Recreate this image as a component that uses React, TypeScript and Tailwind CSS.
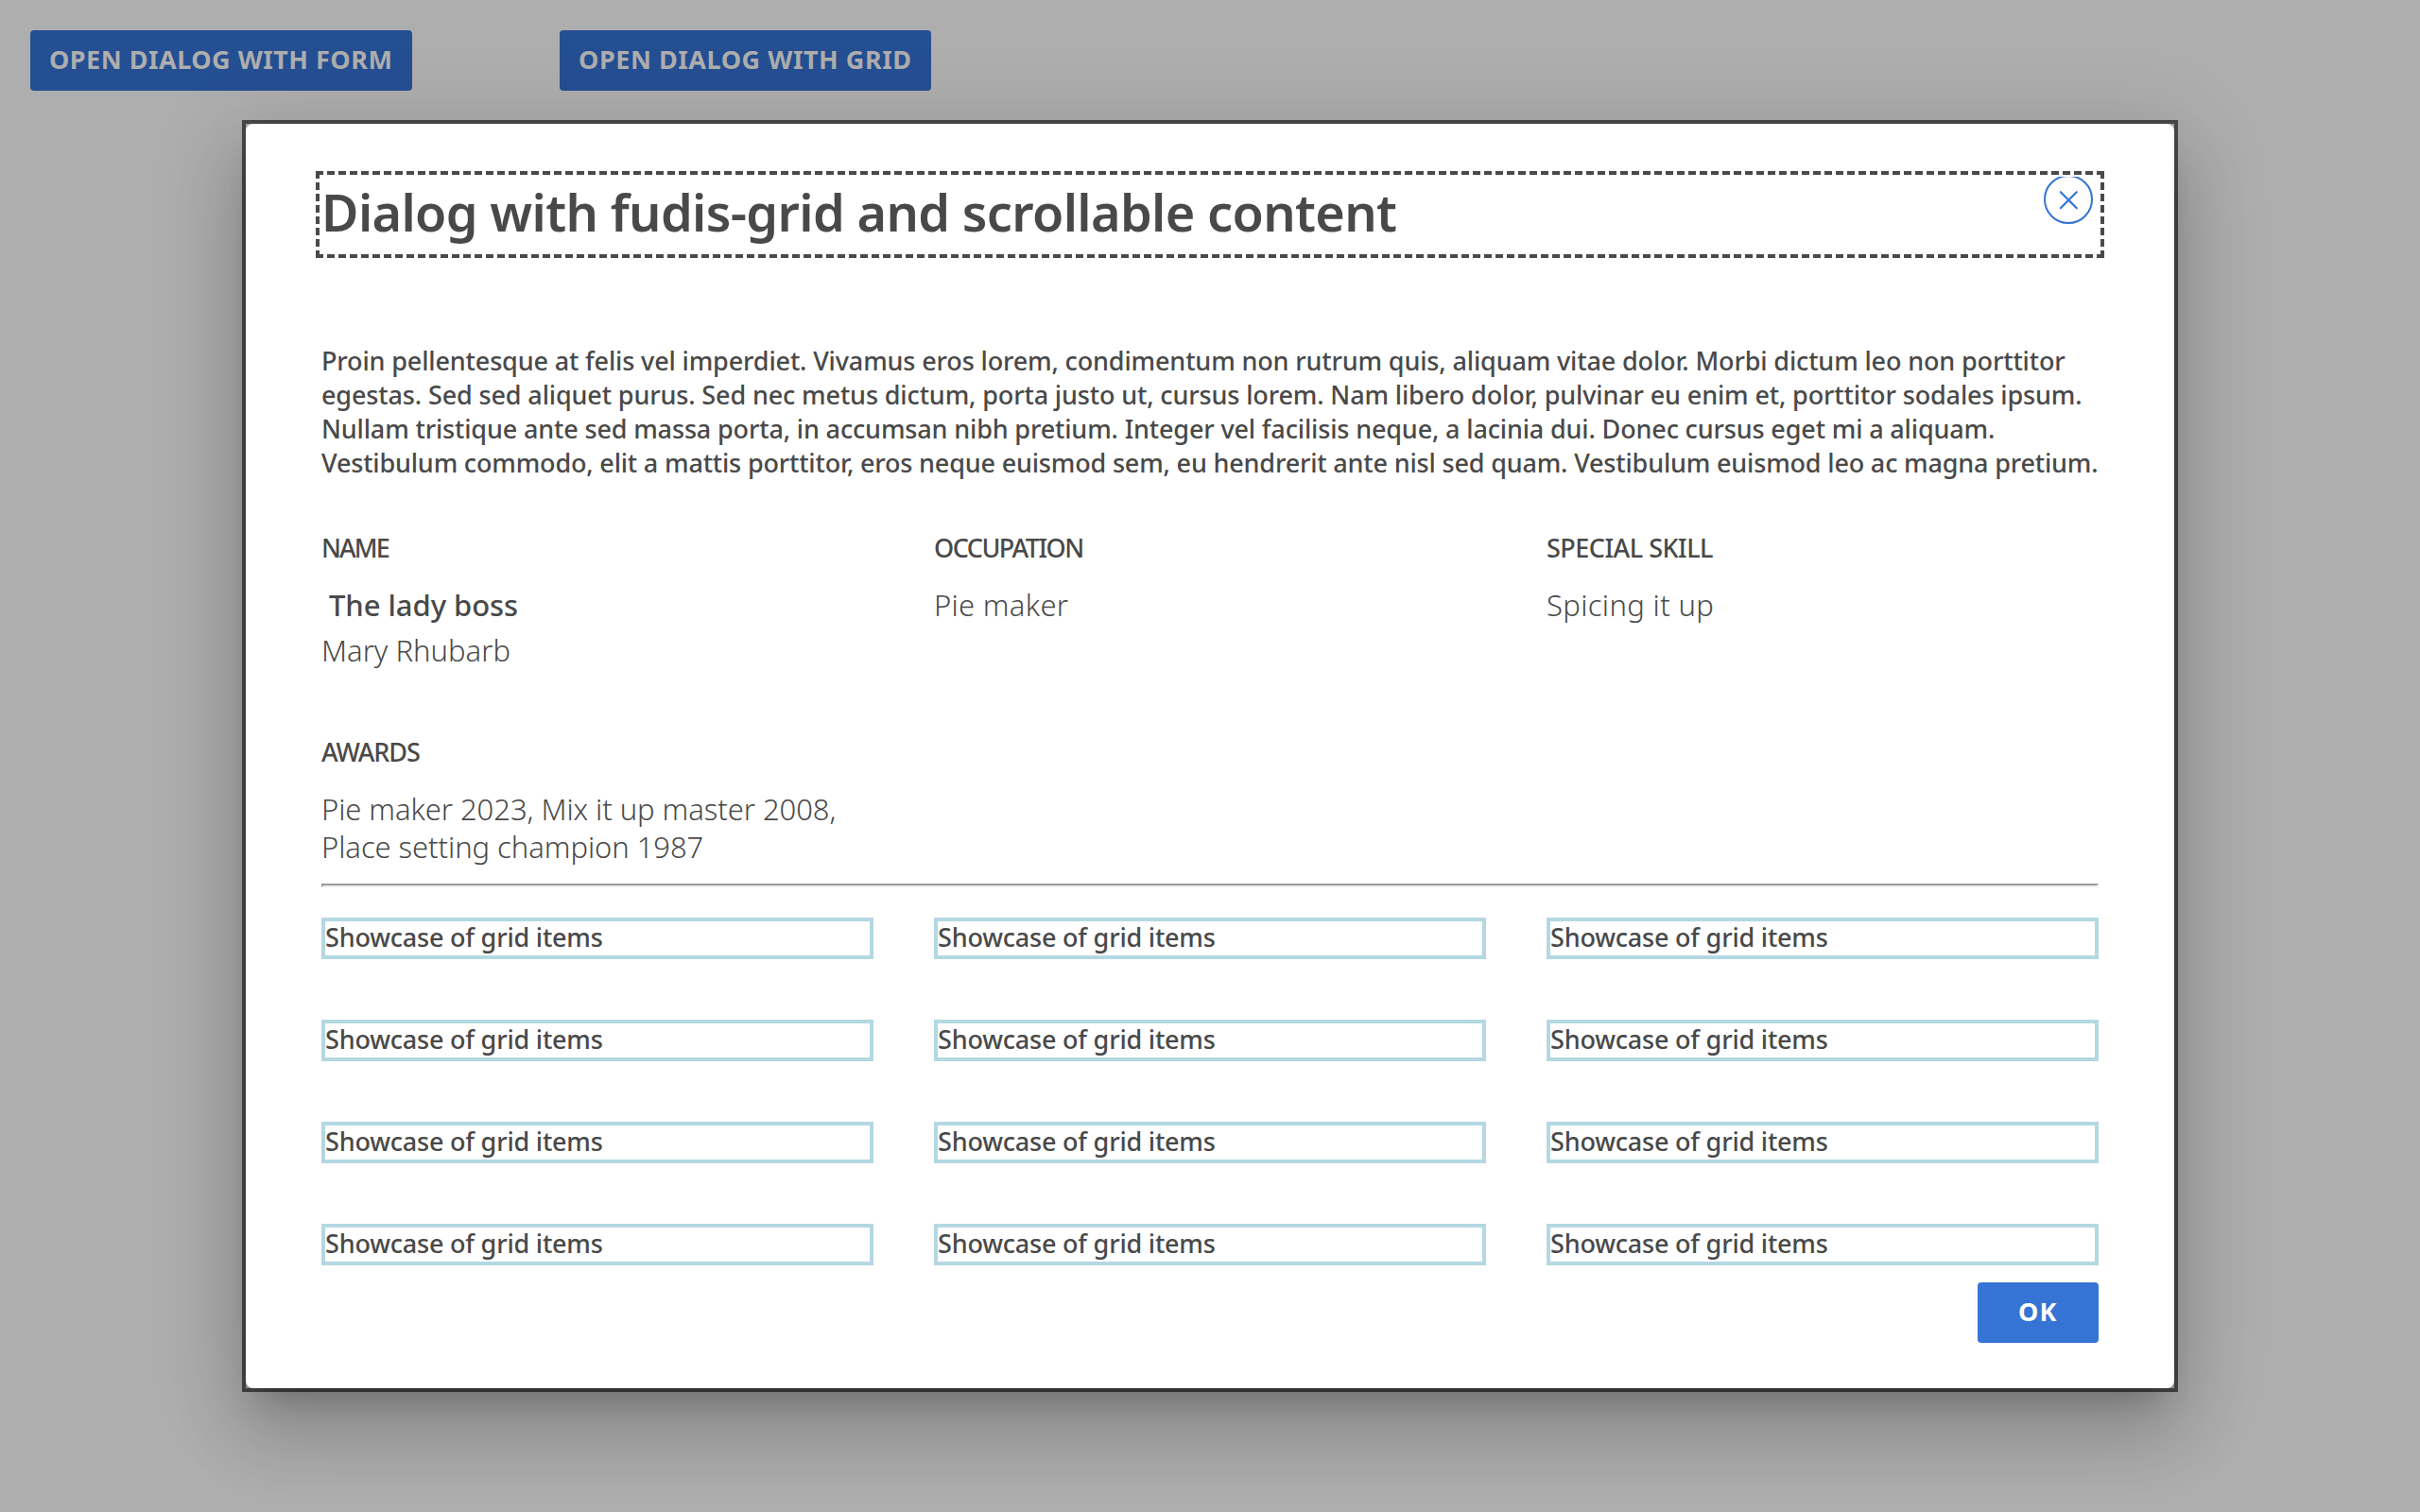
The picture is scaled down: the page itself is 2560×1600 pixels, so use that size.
import React from "react";

function Heading({ children, className }: { children: React.ReactNode; className: string }) {
  return <h2 className={`text-[27px] leading-9 font-medium ${className}`}>{children}</h2>;
}

function CloseIcon() {
  return (
    <svg className="block h-[50px] w-[52px]" viewBox="0 2 52 50" fill="none" stroke="#3573d4" strokeWidth="2">
      <circle cx="26" cy="26" r="25" />
      <path d="M17.8 18.2 34.8 35.2M34.8 18.2 17.8 35.2" strokeWidth="2.2" strokeLinecap="round" />
    </svg>
  );
}

const gridItems = Array.from({ length: 12 }, (_, i) => i);

export default function App() {
  return (
    <div className="relative h-[1600px] w-[2560px] overflow-hidden bg-[#aeaeae] font-['Noto_Sans',sans-serif] text-[#494949]">
      <header className="flex p-8">
        <button className="flex h-16 w-[404px] items-center rounded bg-[#254f93] pb-[3px] pl-5 text-[27px] leading-9 font-bold tracking-[0.5px] whitespace-nowrap text-[#aeaeae]">
          OPEN DIALOG WITH FORM
        </button>
        <button className="ml-[156px] flex h-16 w-[393px] items-center rounded bg-[#254f93] pb-[3px] pl-5 text-[27px] leading-9 font-bold tracking-[0.55px] whitespace-nowrap text-[#aeaeae]">
          OPEN DIALOG WITH GRID
        </button>
      </header>

      <div className="absolute inset-0 flex items-center justify-center">
        <div className="h-[1346px] w-[2048px] border-4 border-[#494949]">
          <div
            role="dialog"
            className="flex h-full flex-col rounded-lg bg-white px-20 pt-[50px] shadow-[0_22px_30px_-14px_rgba(0,0,0,0.2),0_48px_76px_6px_rgba(0,0,0,0.14),0_18px_92px_16px_rgba(0,0,0,0.12)]"
          >
            <div className="relative -mx-1.5 h-[92px] border-4 border-dashed border-[#494949] pl-0.5">
              <h1 className="text-[54px] leading-[78px] font-semibold tracking-[-0.64px] whitespace-nowrap">
                Dialog with fudis-grid and scrollable content
              </h1>
              <button aria-label="Close" className="absolute top-0.5 right-2">
                <CloseIcon />
              </button>
            </div>

            <p className="mt-[91px] text-[27px] leading-9 font-medium whitespace-nowrap">
              <span className="block tracking-[-0.145px]">
                Proin pellentesque at felis vel imperdiet. Vivamus eros lorem, condimentum non rutrum quis, aliquam vitae dolor. Morbi dictum leo non porttitor
              </span>
              <span className="block tracking-[-0.135px]">
                egestas. Sed sed aliquet purus. Sed nec metus dictum, porta justo ut, cursus lorem. Nam libero dolor, pulvinar eu enim et, porttitor sodales ipsum.
              </span>
              <span className="block tracking-[-0.15px]">
                Nullam tristique ante sed massa porta, in accumsan nibh pretium. Integer vel facilisis neque, a lacinia dui. Donec cursus eget mi a aliquam.
              </span>
              <span className="block tracking-[-0.175px]">
                Vestibulum commodo, elit a mattis porttitor, eros neque euismod sem, eu hendrerit ante nisl sed quam. Vestibulum euismod leo ac magna pretium.
              </span>
            </p>

            <div className="mt-[54px] grid grid-cols-3 gap-x-16 gap-y-[70px] text-[31px] leading-10 font-light">
              <section>
                <Heading className="tracking-[-1.9px]">NAME</Heading>
                <p className="mt-[22px] pl-2 font-medium tracking-[-0.05px]">The lady boss</p>
                <p className="mt-2">Mary Rhubarb</p>
              </section>
              <section>
                <Heading className="tracking-[-1.5px]">OCCUPATION</Heading>
                <p className="mt-[22px] tracking-[0.3px]">Pie maker</p>
              </section>
              <section>
                <Heading className="tracking-[-0.5px]">SPECIAL SKILL</Heading>
                <p className="mt-[22px] tracking-[0.35px]">Spicing it up</p>
              </section>
              <section>
                <Heading className="tracking-[-1.1px]">AWARDS</Heading>
                <p className="mt-[22px] whitespace-nowrap tracking-[-0.07px]">
                  Pie maker 2023, Mix it up master 2008,
                  <br />
                  Place setting champion 1987
                </p>
              </section>
            </div>

            <hr className="mt-[19px] h-1 shrink-0 border-2 border-t-[#9a9a9a] border-r-[#eeeeee] border-b-[#eeeeee] border-l-[#9a9a9a]" />

            <div className="mt-8 grid grid-cols-3 gap-16">
              {gridItems.map((item) => (
                <div key={item} className="h-11 border-4 border-[#b4d8e3] text-[27px] leading-[34px] font-medium tracking-[-0.2px]">
                  Showcase of grid items
                </div>
              ))}
            </div>

            <button className="mt-[18px] flex h-16 w-32 shrink-0 items-center self-end rounded bg-[#3573d4] pb-[3px] pl-[43px] text-[27px] leading-9 font-bold tracking-[1.2px] text-white">
              OK
            </button>
          </div>
        </div>
      </div>
    </div>
  );
}
